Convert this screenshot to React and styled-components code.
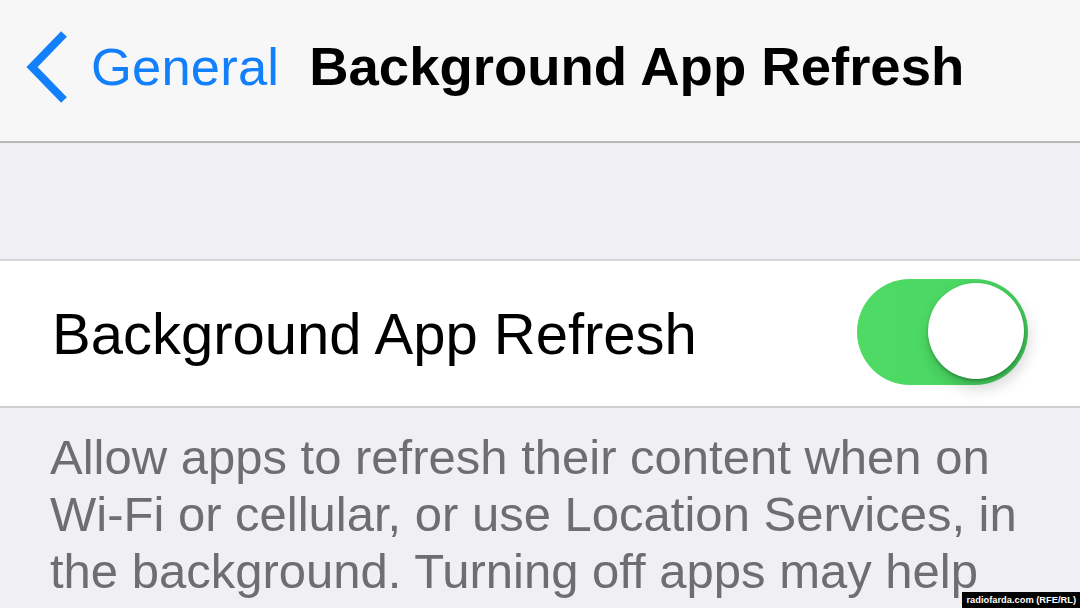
import styled, { createGlobalStyle } from 'styled-components';

const GlobalStyle = createGlobalStyle`
  html, body {
    margin: 0;
    padding: 0;
    background: #efeff4;
  }
  body {
    font-family: "Liberation Sans", Arial, Helvetica, sans-serif;
    -webkit-font-smoothing: antialiased;
  }
`;

const Screen = styled.div`
  position: relative;
  width: 1080px;
  height: 608px;
  overflow: hidden;
  display: flex;
  flex-direction: column;
  background: #efeff4;
`;

const NavBar = styled.header`
  height: 143px;
  flex-shrink: 0;
  display: flex;
  align-items: center;
  padding-left: 25px;
  padding-bottom: 8px;
  box-sizing: border-box;
  background: #f7f7f7;
  border-bottom: 2px solid #b9b9bc;
`;

const BackButton = styled.button`
  display: flex;
  align-items: center;
  gap: 22px;
  border: 0;
  padding: 0;
  background: none;
  color: #127ffb;
  font-family: inherit;
  font-size: 52.5px;
  letter-spacing: 0.2px;
  cursor: pointer;
`;

const Title = styled.h1`
  margin: 0 0 0 30px;
  font-size: 54.5px;
  font-weight: 700;
  color: #000;
  letter-spacing: 0;
`;

const GroupGap = styled.div`
  height: 116px;
  flex-shrink: 0;
  border-bottom: 2px solid #d3d3d8;
`;

const Cell = styled.div`
  height: 145px;
  flex-shrink: 0;
  display: flex;
  align-items: center;
  justify-content: space-between;
  padding: 0 52px 0 52px;
  background: #fff;
  border-bottom: 2px solid #cfcfd3;
`;

const CellLabel = styled.span`
  font-size: 58px;
  color: #000;
`;

const Track = styled.div`
  position: relative;
  width: 171px;
  height: 106px;
  border-radius: 53px;
  background: linear-gradient(90deg, #4fda66 0%, #4bd763 60%, #44cd5b 100%);
  margin-top: -3px;
  flex-shrink: 0;
`;

const Knob = styled.div`
  position: absolute;
  top: 4px;
  right: 4px;
  width: 96px;
  height: 96px;
  border-radius: 50%;
  background: #fff;
  box-shadow: 3px 8px 16px rgba(0, 0, 0, 0.2), 0 2px 3px rgba(0, 80, 20, 0.35);
`;

const Footer = styled.p`
  margin: 0;
  padding: 21px 40px 0 50px;
  font-size: 49px;
  line-height: 57px;
  color: #6d6d72;
`;

const Watermark = styled.div`
  position: absolute;
  right: 0;
  bottom: 0;
  padding: 0 4px;
  height: 16px;
  background: #000;
  color: #fff;
  font-size: 9.3px;
  font-weight: 700;
  line-height: 16px;
  white-space: nowrap;
`;

function Chevron() {
  return (
    <svg width="44" height="74" viewBox="0 0 44 74">
      <polyline
        points="39,4 7,37 39,70"
        fill="none"
        stroke="#127ffb"
        strokeWidth="8"
        strokeLinejoin="miter"
      />
    </svg>
  );
}

export default function App() {
  return (
    <>
      <GlobalStyle />
      <Screen>
        <NavBar>
          <BackButton>
            <Chevron />
            General
          </BackButton>
          <Title>Background App Refresh</Title>
        </NavBar>
        <GroupGap />
        <Cell>
          <CellLabel>Background App Refresh</CellLabel>
          <Track>
            <Knob />
          </Track>
        </Cell>
        <Footer>
          Allow apps to refresh their content when on Wi-Fi or cellular, or use
          Location Services, in the background. Turning off apps may help
          preserve battery life.
        </Footer>
        <Watermark>radiofarda.com (RFE/RL)</Watermark>
      </Screen>
    </>
  );
}
